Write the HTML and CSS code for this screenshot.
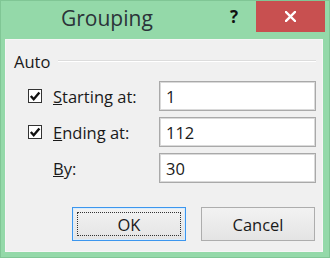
FILE: index.html
```html
<html><head>
<meta charset="utf-8">
<meta name="viewport" content="width=device-width, initial-scale=1">
<title>Grouping</title>
<link rel="stylesheet" href="styles.css">
</head>
<body>
  <div class="window">
    <header class="titlebar">
      <div class="title">Grouping</div>
      <div class="help">?</div>
      <div class="close">
        <svg width="11" height="11" viewBox="0 0 11 11">
          <path d="M1 1 L10 10 M10 1 L1 10" stroke="#fff" stroke-width="2.4" stroke-linecap="square"/>
        </svg>
      </div>
    </header>

    <div class="client">
      <div class="group-head">
        <span class="group-label">Auto</span>
        <span class="group-line"></span>
      </div>

      <div class="rows">
        <span class="check"><svg width="12" height="12" viewBox="0 0 12 12"><path d="M1.8 6 L4.7 9.2 L10.4 2.4" fill="none" stroke="#111" stroke-width="2.4"/></svg></span>
        <label class="row-label"><u>S</u>tarting at:</label>
        <input class="field" type="text" value="1">

        <span class="check"><svg width="12" height="12" viewBox="0 0 12 12"><path d="M1.8 6 L4.7 9.2 L10.4 2.4" fill="none" stroke="#111" stroke-width="2.4"/></svg></span>
        <label class="row-label"><u>E</u>nding at:</label>
        <input class="field" type="text" value="112">

        <span></span>
        <label class="row-label"><u>B</u>y:</label>
        <input class="field" type="text" value="30">
      </div>

      <div class="buttons">
        <button class="btn btn-default">OK</button>
        <button class="btn">Cancel</button>
      </div>
    </div>
  </div>
</body>
</html>
```

FILE: styles.css
```css
body, html {
  margin: 0;
  padding: 0;
  font-family: 'Open Sans', 'Noto Sans', sans-serif;
  background-color: #93d8a8;
}
.window {
  width: 330px;
  height: 258px;
  box-sizing: border-box;
  border: 1px solid #80c695;
  background-color: #94d9a9;
  display: flex;
  flex-direction: column;
}
.titlebar {
  height: 38px;
  flex-shrink: 0;
  display: flex;
  align-items: flex-start;
}
.title {
  margin-left: 60px;
  margin-top: 3px;
  font-size: 21px;
  color: #2b3339;
  width: 160px;
}
.help {
  margin-left: 9px;
  margin-top: 4px;
  font-size: 17px;
  font-weight: bold;
  color: #111;
}
.close {
  margin-left: auto;
  margin-right: 4px;
  width: 69px;
  height: 31px;
  background-color: #c85050;
  display: flex;
  align-items: center;
  justify-content: center;
}
.client {
  flex: 1;
  margin: 0 6px 5px 4px;
  background-color: #f0f0f0;
  border: 1px solid #f6f6f6;
  box-sizing: border-box;
  padding: 11px 6px 0 8px;
  color: #1a1a1a;
  font-size: 16.5px;
}
.group-head {
  display: flex;
  align-items: center;
  height: 20px;
}
.group-label {
  margin-right: 8px;
}
.group-line {
  flex: 1;
  height: 0;
  border-top: 1px solid #dcdcdc;
  border-bottom: 1px solid #fff;
}
.rows {
  display: grid;
  grid-template-columns: 14px 117px 157px;
  row-gap: 6px;
  margin-top: 10px;
  margin-left: 14px;
  align-items: center;
}
.check {
  width: 12px;
  height: 12px;
  border: 1px solid #333;
  background-color: #fff;
  display: flex;
  align-items: center;
  justify-content: center;
}
.row-label {
  padding-left: 11px;
}
.field {
  height: 30px;
  width: 157px;
  box-sizing: border-box;
  border: 1px solid #a9a9a9;
  box-shadow: inset 0 0 0 1px #dadada;
  background-color: #fff;
  font-family: inherit;
  font-size: 16.5px;
  color: #1a1a1a;
  padding: 0 6px;
}
.buttons {
  display: flex;
  gap: 15px;
  margin-top: 24px;
  margin-left: 58px;
}
.btn {
  position: relative;
  width: 114px;
  height: 34px;
  border: 1px solid #adadad;
  background: linear-gradient(#f2f2f2, #e4e4e4);
  font-family: inherit;
  font-size: 16.5px;
  color: #1a1a1a;
  padding: 0;
}
.btn-default {
  border-color: #3c96ee;
  box-shadow: inset 0 0 0 1px #d9ecfc;
}
.btn-default::after {
  content: "";
  position: absolute;
  top: 4px;
  left: 4px;
  right: 4px;
  bottom: 4px;
  border: 1px dotted #333;
}
```
